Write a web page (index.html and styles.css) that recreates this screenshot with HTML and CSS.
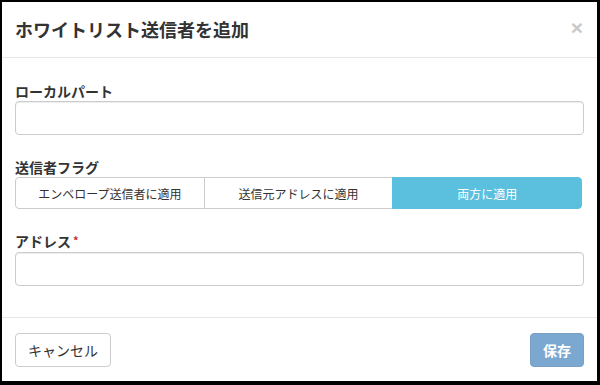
FILE: index.html
```html
<!DOCTYPE html>
<html lang="ja">
<head>
<meta charset="utf-8">
<title>ホワイトリスト送信者を追加</title>
<link rel="stylesheet" href="styles.css">
</head>
<body>
<div class="modal">
  <div class="modal-header">
    <h4 class="modal-title">ホワイトリスト送信者を追加</h4>
    <span class="close">×</span>
  </div>
  <div class="modal-body">
    <div class="form-group">
      <label class="label">ローカルパート</label>
      <div class="input"></div>
    </div>
    <div class="form-group">
      <label class="label">送信者フラグ</label>
      <div class="btn-group">
        <span class="seg">エンベロープ送信者に適用</span>
        <span class="seg">送信元アドレスに適用</span>
        <span class="seg active">両方に適用</span>
      </div>
    </div>
    <div class="form-group last">
      <label class="label">アドレス<span class="req">*</span></label>
      <div class="input"></div>
    </div>
  </div>
  <div class="modal-footer">
    <span class="btn btn-default">キャンセル</span>
    <span class="btn btn-primary">保存</span>
  </div>
</div>
</body>
</html>
```
FILE: styles.css
```css
* { box-sizing: border-box; }
html, body { margin: 0; padding: 0; }
body {
  background: #000;
  width: 600px;
  height: 385px;
  overflow: hidden;
  font-family: "Noto Sans CJK JP", "Liberation Sans", sans-serif;
  color: #333;
}
.modal {
  margin: 2px 0 0 2px;
  width: 595px;
  height: 379px;
  background: #fff;
  overflow: hidden;
}
.modal-header {
  display: flex;
  justify-content: space-between;
  align-items: center;
  padding: 15px 14px 15px 13px;
  border-bottom: 1px solid #e5e5e5;
}
.modal-title {
  margin: 0;
  font-size: 18px;
  line-height: 25px;
  font-weight: 700;
  color: #333;
}
.close {
  font-family: "Liberation Sans", sans-serif;
  font-size: 21px;
  font-weight: 700;
  line-height: 1;
  color: #c9c9c9;
  margin-top: -4px;
}
.modal-body {
  padding: 23px 13px 31px 13px;
}
.form-group { margin-bottom: 22px; }
.form-group.last { margin-bottom: 0; }
.label {
  display: block;
  font-size: 14px;
  line-height: 20px;
  font-weight: 700;
  color: #333;
}
.req {
  color: #c9302c;
  font-size: 11px;
  vertical-align: top;
  margin-left: 2px;
  position: relative;
  top: -1px;
}
.input {
  height: 34px;
  border: 1px solid #ccc;
  border-radius: 4px;
  box-shadow: inset 0 1px 1px rgba(0,0,0,.075);
}
.form-group.last .input { margin-top: 1px; }
.btn-group {
  display: flex;
  height: 32px;
  margin-right: 2px;
}
.seg {
  flex: 1;
  display: flex;
  align-items: center;
  justify-content: center;
  font-size: 12px;
  color: #333;
  border: 1px solid #ccc;
  background: #fff;
}
.seg + .seg { margin-left: -1px; }
.seg:first-child { border-radius: 4px 0 0 4px; }
.seg:last-child { border-radius: 0 4px 4px 0; }
.seg.active {
  background: #5bc0de;
  border-color: #5bc0de;
  color: #fff;
}
.modal-footer {
  display: flex;
  justify-content: space-between;
  padding: 15px 13px;
  border-top: 1px solid #e5e5e5;
}
.btn {
  display: inline-flex;
  align-items: center;
  height: 34px;
  padding: 0 12px;
  font-size: 14px;
  border: 1px solid #ccc;
  border-radius: 4px;
}
.btn-default { color: #333; background: #fff; }
.btn-primary {
  color: #fff;
  background: #7aa8d0;
  border-color: #77a0c4;
  font-weight: 700;
}
```
